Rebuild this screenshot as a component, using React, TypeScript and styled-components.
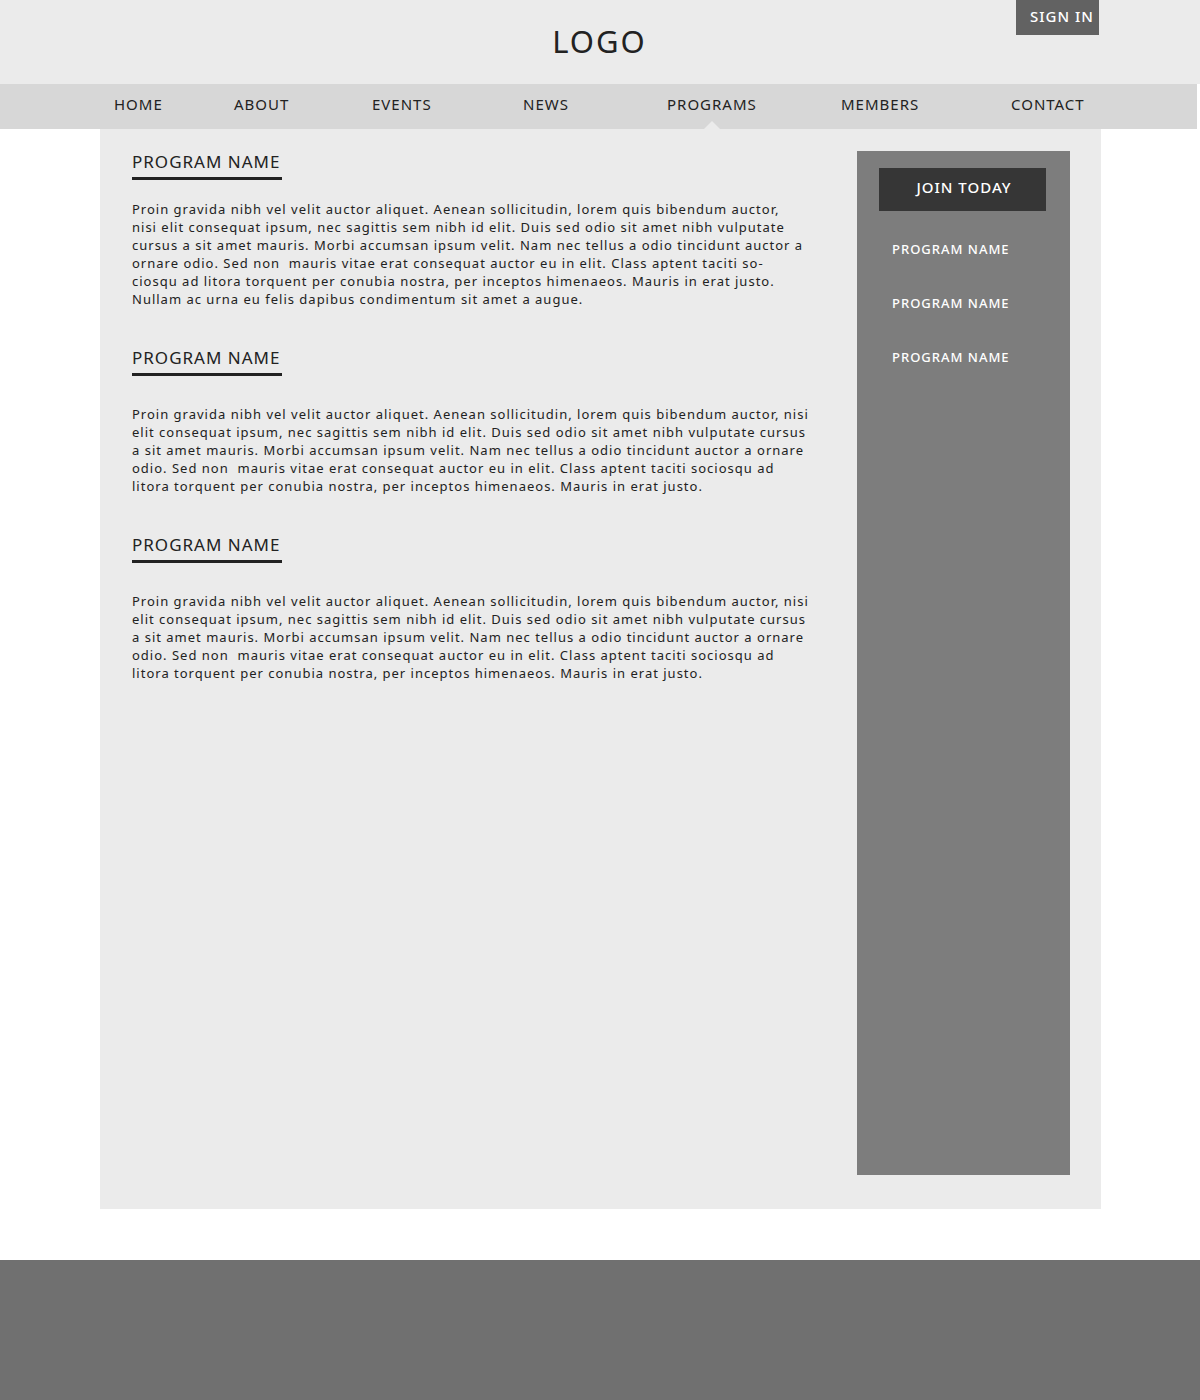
import React from 'react';
import styled, { createGlobalStyle } from 'styled-components';

const color = {
  ink: '#222222',
  panel: '#ebebeb',
  nav: '#d7d7d7',
  signIn: '#626262',
  sidebar: '#7d7d7d',
  join: '#363636',
  footer: '#707070',
};

const GlobalStyle = createGlobalStyle`
  *, *::before, *::after {
    box-sizing: border-box;
  }

  body {
    margin: 0;
    background: #ffffff;
    color: ${color.ink};
    font-family: 'Noto Sans', 'Open Sans', sans-serif;
    letter-spacing: 1px;
  }
`;

const Page = styled.div`
  display: flex;
  flex-direction: column;
  min-height: 100vh;
`;

const Header = styled.header`
  background: ${color.panel};
  padding: 0 101px 0 100px;
`;

const HeaderInner = styled.div`
  display: grid;
  grid-template-columns: 1fr auto 1fr;
  align-items: start;
  height: 84px;
`;

const Logo = styled.a`
  grid-column: 2;
  padding-top: 21px;
  color: inherit;
  font-size: 31px;
  line-height: 40px;
  letter-spacing: 2px;
  text-decoration: none;
`;

const SignIn = styled.button`
  justify-self: end;
  width: 83px;
  height: 35px;
  padding: 0 7px 3px 14px;
  border: 0;
  background: ${color.signIn};
  color: #ffffff;
  font: inherit;
  font-size: 15px;
  font-weight: 500;
  letter-spacing: inherit;
  white-space: nowrap;
  cursor: pointer;
`;

const Nav = styled.nav`
  margin-right: 3px;
  padding: 0 97px 0 114px;
  background: ${color.nav};
`;

const NavList = styled.ul`
  display: grid;
  grid-template-columns: 120fr 138fr 151fr 144fr 174fr 170fr 89fr;
  margin: 0;
  padding: 0;
  list-style: none;
`;

const NavLink = styled.a<{ $current?: boolean }>`
  position: relative;
  display: inline-block;
  height: 45px;
  padding-top: 9px;
  color: inherit;
  font-size: 15px;
  line-height: 22px;
  text-decoration: none;

  &::after {
    content: '';
    display: ${({ $current }) => ($current ? 'block' : 'none')};
    position: absolute;
    bottom: 0;
    left: 50%;
    margin-left: -8px;
    border: 8px solid transparent;
    border-top-width: 0;
    border-bottom-color: ${color.panel};
  }
`;

const Main = styled.main`
  display: flex;
  justify-content: space-between;
  min-height: 1080px;
  margin: 0 99px 0 100px;
  padding: 22px 31px 34px 32px;
  background: ${color.panel};
`;

const Programs = styled.div`
  display: flex;
  flex: 1;
  flex-direction: column;
  gap: 39px;
  min-width: 0;
`;

const ProgramTitle = styled.h2`
  width: 150px;
  margin: 0;
  padding-bottom: 4px;
  border-bottom: 3px solid ${color.ink};
  font-size: 17px;
  font-weight: 400;
  line-height: 22px;
  white-space: nowrap;
`;

const ProgramText = styled.p<{ $gap: number }>`
  margin: ${({ $gap }) => $gap}px 0 0;
  font-size: 13px;
  line-height: 18px;
  white-space: pre-wrap;
`;

const Sidebar = styled.aside`
  flex: 0 0 213px;
  padding: 17px 24px 17px 22px;
  background: ${color.sidebar};
  color: #ffffff;
`;

const JoinButton = styled.button`
  display: block;
  width: 100%;
  height: 43px;
  padding: 0 0 5px 3px;
  border: 0;
  background: ${color.join};
  color: inherit;
  font: inherit;
  font-size: 15px;
  font-weight: 500;
  letter-spacing: inherit;
  cursor: pointer;
`;

const SideList = styled.ul`
  display: flex;
  flex-direction: column;
  gap: 36px;
  margin: 29px 0 0;
  padding: 0 0 0 13px;
  list-style: none;
  font-size: 13px;
  font-weight: 500;
  line-height: 18px;
`;

const SideLink = styled.a`
  display: block;
  color: inherit;
  text-decoration: none;
`;

const Footer = styled.footer`
  flex: 1;
  min-height: 140px;
  margin-top: 51px;
  background: ${color.footer};
`;

const navItems = ['HOME', 'ABOUT', 'EVENTS', 'NEWS', 'PROGRAMS', 'MEMBERS', 'CONTACT'];

const shortCopy = `Proin gravida nibh vel velit auctor aliquet. Aenean sollicitudin, lorem quis bibendum auctor, nisi
elit consequat ipsum, nec sagittis sem nibh id elit. Duis sed odio sit amet nibh vulputate cursus
a sit amet mauris. Morbi accumsan ipsum velit. Nam nec tellus a odio tincidunt auctor a ornare
odio. Sed non  mauris vitae erat consequat auctor eu in elit. Class aptent taciti sociosqu ad
litora torquent per conubia nostra, per inceptos himenaeos. Mauris in erat justo.`;

const longCopy = `Proin gravida nibh vel velit auctor aliquet. Aenean sollicitudin, lorem quis bibendum auctor,
nisi elit consequat ipsum, nec sagittis sem nibh id elit. Duis sed odio sit amet nibh vulputate
cursus a sit amet mauris. Morbi accumsan ipsum velit. Nam nec tellus a odio tincidunt auctor a
ornare odio. Sed non  mauris vitae erat consequat auctor eu in elit. Class aptent taciti so-
ciosqu ad litora torquent per conubia nostra, per inceptos himenaeos. Mauris in erat justo.
Nullam ac urna eu felis dapibus condimentum sit amet a augue.`;

const programs = [
  { id: 'program-1', name: 'PROGRAM NAME', copy: longCopy, gap: 20 },
  { id: 'program-2', name: 'PROGRAM NAME', copy: shortCopy, gap: 29 },
  { id: 'program-3', name: 'PROGRAM NAME', copy: shortCopy, gap: 29 },
];

export default function App() {
  return (
    <Page>
      <GlobalStyle />
      <Header>
        <HeaderInner>
          <Logo href="#">LOGO</Logo>
          <SignIn type="button">SIGN IN</SignIn>
        </HeaderInner>
      </Header>
      <Nav>
        <NavList>
          {navItems.map((item) => (
            <li key={item}>
              <NavLink
                href="#"
                $current={item === 'PROGRAMS'}
                aria-current={item === 'PROGRAMS' ? 'page' : undefined}
              >
                {item}
              </NavLink>
            </li>
          ))}
        </NavList>
      </Nav>
      <Main>
        <Programs>
          {programs.map((program) => (
            <section key={program.id} id={program.id}>
              <ProgramTitle>{program.name}</ProgramTitle>
              <ProgramText $gap={program.gap}>{program.copy}</ProgramText>
            </section>
          ))}
        </Programs>
        <Sidebar>
          <JoinButton type="button">JOIN TODAY</JoinButton>
          <SideList>
            {programs.map((program) => (
              <li key={program.id}>
                <SideLink href={`#${program.id}`}>{program.name}</SideLink>
              </li>
            ))}
          </SideList>
        </Sidebar>
      </Main>
      <Footer />
    </Page>
  );
}
